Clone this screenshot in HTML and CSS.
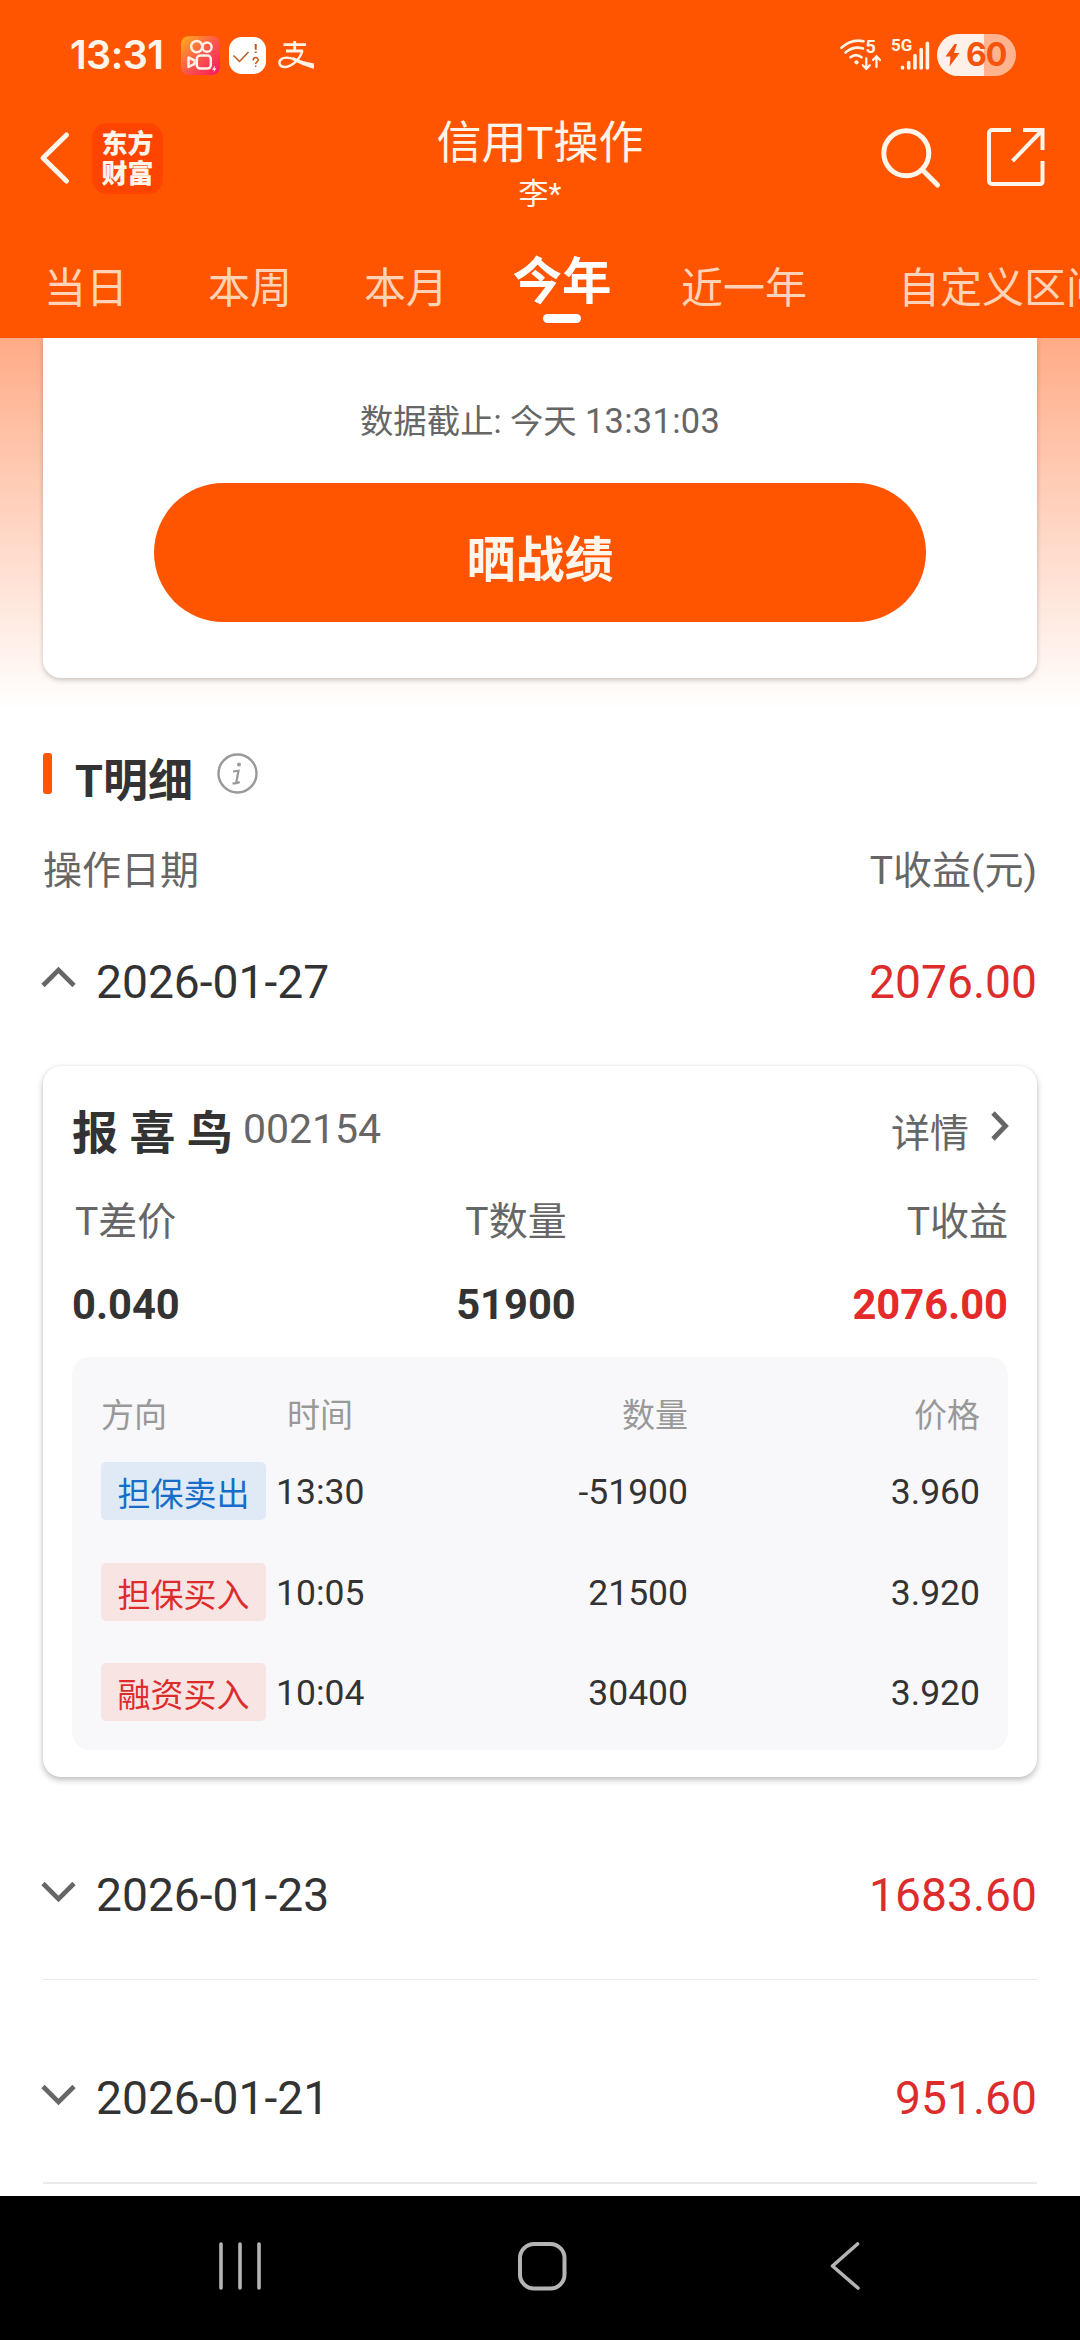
FILE: index.html
```html
<!DOCTYPE html>
<html lang="zh-CN">
<head>
<meta charset="utf-8">
<title>信用T操作</title>
<link rel="stylesheet" href="styles.css">
</head>
<body>
<header class="header">
  <div class="status">
    <span class="clock">13:31</span>
    <div class="status-apps">
      <svg width="39" height="39" viewBox="0 0 39 39">
        <defs><linearGradient id="ks" x1="0" y1="0" x2="1" y2="1"><stop offset="0" stop-color="#ffae1a"/><stop offset=".5" stop-color="#fb5a4c"/><stop offset="1" stop-color="#f9135f"/></linearGradient></defs>
        <rect width="39" height="39" rx="8" fill="url(#ks)"/>
        <g fill="none" stroke="#fff0e8" stroke-width="2.5"><circle cx="15.7" cy="10.6" r="5.6"/><circle cx="26" cy="11.2" r="4.6"/><rect x="15.8" y="19.6" width="14" height="13" rx="3.5"/><path d="M7.5 21.5v9.5l6-3.2v-3.4z" stroke-linejoin="round"/></g>
        <path d="M34 29.5l-3 4.2h2l-.6 2.8 3-4.2h-1.9z" fill="#fff0e8"/>
      </svg>
      <svg width="37" height="37" viewBox="0 0 37 37">
        <rect width="37" height="37" rx="12.5" fill="#fff"/>
        <g fill="none" stroke="#bb5a1d" stroke-width="1.5"><path d="M4.5 18.5l6 6L19.500 15"/><path d="M26.700 7v5.800M26.700 14.500v1.500" stroke-width="2"/><path d="M24.200 23.500c0-4 5-3.500 5-.6 0 2-2.500 1.800-2.500 4.100M26.700 28.500v1.500"/></g>
      </svg>
      <svg class="alipay" width="36" height="28" viewBox="0 0 36 28">
        <path d="M5.500 3.700H28M16.700 0v9.500M8 10h17" fill="none" stroke="#fff3e8" stroke-width="2.800"/>
        <path d="M24.500 9.500C22.500 17 14.500 26 6.500 26 1 26 0 20.500 3.500 18 7 15.500 12 16.500 18 19" fill="none" stroke="#fff3e8" stroke-width="2.400"/>
        <path d="M15 16Q24 20.500 36 22.500v5.500Q24 24.500 14 19z" fill="#fff3e8"/>
      </svg>
    </div>
    <div class="status-net">
      <svg width="44" height="34" viewBox="0 0 44 34">
        <g fill="none" stroke="#fff3e8" stroke-width="2.600" stroke-linecap="round"><path d="M2.500 9.800Q12 .7 24.500 3.200M6.500 14.500Q14.500 7.500 24 10.500M11.500 19.300Q17 14.800 22.500 19.300"/><path d="M27.300 20.500v10M23.800 27.300l3.500 3.500 3.500-3.500M37.500 29V18.500M34 22l3.500-3.500L41 22" stroke-width="2.300"/></g>
        <circle cx="17.500" cy="24.300" r="2.100" fill="#fff3e8"/>
        <text class="wifi-gen" x="26.500" y="15">5</text>
      </svg>
      <svg width="40" height="34" viewBox="0 0 40 34">
        <text class="cell-gen" x="1" y="12.500">5G</text>
        <path d="M12.500 30v-.8M18.700 30v-5.500M25 30V17.500M31.200 30V11.500M37.400 30V5.300" fill="none" stroke="#fff3e8" stroke-width="3.600" stroke-linecap="round"/>
      </svg>
      <div class="battery">
        <svg width="15" height="23" viewBox="0 0 15 23"><path d="M9.500 0L.5 12.500h5L4.500 22.500 14.500 9H9L12 0z" fill="#f4530b"/></svg>
        <span>60</span>
      </div>
    </div>
  </div>

  <div class="nav">
    <div class="nav-left">
      <svg width="29" height="52" viewBox="0 0 29 52"><path d="M26.500 3L3 26l23.500 23" fill="none" stroke="#fff5ea" stroke-width="5" stroke-linecap="round" stroke-linejoin="round"/></svg>
      <div class="logo">东方<br>财富</div>
    </div>
    <div class="nav-title"><h1>信用T操作</h1><p>李*</p></div>
    <div class="nav-right">
      <svg width="60" height="60" viewBox="0 0 60 60" fill="none" stroke="#fff5ea" stroke-width="5" stroke-linecap="round"><circle cx="25.300" cy="25.300" r="22.500"/><path d="M41.500 42L56.500 57"/></svg>
      <svg width="58" height="58" viewBox="0 0 58 58" fill="none" stroke="#fff5ea" stroke-width="4"><path d="M24 2H5a3 3 0 0 0-3 3v48a3 3 0 0 0 3 3h48a2.500 2.500 0 0 0 2.500-3V33M36 2h19.500v20M55 2.500L25.500 33"/></svg>
    </div>
  </div>

  <nav class="tabs">
    <span class="tab">当日</span>
    <span class="tab">本周</span>
    <span class="tab">本月</span>
    <span class="tab active">今年</span>
    <span class="tab">近一年</span>
    <span class="tab">自定义区间</span>
  </nav>
</header>

<main class="content">
  <section class="hero">
    <div class="hero-card">
      <p>数据截止: 今天 <span class="time">13:31:03</span></p>
      <div class="share">晒战绩</div>
    </div>
  </section>

  <section class="detail">
    <div class="section-title">
      <i class="mark"></i>
      <h2>T明细</h2>
      <svg width="41" height="41" viewBox="0 0 41 41"><circle cx="20.500" cy="20.500" r="19" fill="none" stroke="#999" stroke-width="2.400"/><circle cx="22" cy="11.500" r="2" fill="#999"/><path d="M16 18.500l5.500-.8-2.200 11.600q-.3 1.600 3.500-.3M15.500 30.300q3.500.5 7-1.300" fill="none" stroke="#999" stroke-width="2.200"/></svg>
    </div>
    <div class="columns"><span>操作日期</span><span>T收益(元)</span></div>

    <div class="day open">
      <svg class="chev" width="36" height="22" viewBox="0 0 36 22"><path d="M2 19.500L17.500 4 33 19.500" fill="none" stroke="#666" stroke-width="4.600"/></svg>
      <span class="date">2026-01-27</span><span class="profit">2076.00</span>
    </div>

    <div class="stock">
      <div class="stock-head">
        <strong>报 喜 鸟</strong><span class="code">002154</span><span class="more">详情</span>
        <svg width="20" height="32" viewBox="0 0 20 32"><path d="M3 3l12.500 13L3 29" fill="none" stroke="#666" stroke-width="4.800"/></svg>
      </div>
      <div class="stats labels"><span>T差价</span><span>T数量</span><span>T收益</span></div>
      <div class="stats values"><span>0.040</span><span>51900</span><span class="up">2076.00</span></div>
      <div class="trades">
        <div class="trade head"><span>方向</span><span>时间</span><span>数量</span><span>价格</span></div>
        <div class="trade"><span class="badge sell">担保卖出</span><span class="cell">13:30</span><span class="cell">-51900</span><span class="cell">3.960</span></div>
        <div class="trade"><span class="badge">担保买入</span><span class="cell">10:05</span><span class="cell">21500</span><span class="cell">3.920</span></div>
        <div class="trade"><span class="badge">融资买入</span><span class="cell">10:04</span><span class="cell">30400</span><span class="cell">3.920</span></div>
      </div>
    </div>

    <div class="day">
      <svg class="chev" width="36" height="22" viewBox="0 0 36 22"><path d="M2 2.500L17.500 18 33 2.500" fill="none" stroke="#666" stroke-width="4.600"/></svg>
      <span class="date">2026-01-23</span><span class="profit">1683.60</span>
    </div>
    <div class="day last">
      <svg class="chev" width="36" height="22" viewBox="0 0 36 22"><path d="M2 2.500L17.500 18 33 2.500" fill="none" stroke="#666" stroke-width="4.600"/></svg>
      <span class="date">2026-01-21</span><span class="profit">951.60</span>
    </div>
  </section>
</main>

<footer class="sysnav">
  <svg width="44" height="50" viewBox="0 0 44 50"><path d="M3 3v44M22 3v44M41 3v44" stroke="#b4b4b4" stroke-width="3.600" stroke-linecap="round"/></svg>
  <svg class="home" width="50" height="50" viewBox="0 0 50 50"><rect x="3" y="3" width="44.500" height="44.500" rx="14" fill="none" stroke="#b4b4b4" stroke-width="4"/></svg>
  <svg class="back" width="32" height="50" viewBox="0 0 32 50"><path d="M28.500 3L3.500 25l25.500 22" fill="none" stroke="#b4b4b4" stroke-width="3.600" stroke-linecap="round" stroke-linejoin="round"/></svg>
</footer>
</body>
</html>
```
FILE: styles.css
```css
* { box-sizing: border-box; margin: 0; padding: 0; }

body {
  width: 1080px;
  height: 2340px;
  display: flex;
  flex-direction: column;
  overflow: hidden;
  background: #fff;
  color: #333;
  font-family: Roboto, "Noto Sans CJK SC", sans-serif;
}

svg { display: block; flex: none; overflow: visible; }
span, p, h1, h2, strong { white-space: nowrap; }

/* Header */
.header {
  position: relative;
  z-index: 1;
  height: 338px;
  flex: none;
  background: #ff5500;
  color: #fff5ea;
}

.status {
  height: 110px;
  padding: 0 64px 0 70px;
  display: flex;
  align-items: center;
}
.clock {
  width: 111px;
  font: 600 39.5px/50px Inter, sans-serif;
  letter-spacing: -0.6px;
}
.status-apps { display: flex; align-items: center; gap: 9px; }
.alipay { margin-left: 3px; }
.status-net { margin-left: auto; display: flex; align-items: center; gap: 7px; }
.wifi-gen { font: 700 18px Roboto, sans-serif; fill: #fff3e8; }
.cell-gen { font: 700 17px Roboto, sans-serif; fill: #fff3e8; }
.battery {
  width: 79px;
  height: 42px;
  padding-left: 8px;
  border-radius: 21px;
  display: flex;
  align-items: center;
  gap: 6px;
  background: linear-gradient(90deg, #fff1e9 47px, #ffb48f 47px);
  color: #f4530b;
  font: 700 32px/42px Inter, sans-serif;
  letter-spacing: -1px;
}

.nav {
  height: 96px;
  display: grid;
  grid-template-columns: 1fr auto 1fr;
  grid-template-rows: 96px;
  align-items: center;
}
.nav-left { display: flex; align-items: center; gap: 23px; padding-left: 40px; }
.logo {
  width: 71px;
  height: 71px;
  padding-top: 4px;
  border-radius: 15px;
  background: #ff4400;
  text-align: center;
  font: 900 26px/30px "Noto Sans CJK SC", sans-serif;
}
.nav-title { align-self: start; padding-top: 7px; text-align: center; }
.nav-title h1 { font-size: 45px; line-height: 54px; font-weight: 400; }
.nav-title p { margin-top: 5px; font-size: 30px; line-height: 36px; }
.nav-right { display: flex; justify-content: flex-end; gap: 46px; padding-right: 35px; }

.tabs {
  height: 132px;
  padding-left: 2px;
  display: grid;
  grid-template-columns: 168px 160px 152px 160px 204px 314px;
  justify-items: center;
  align-items: start;
  overflow: hidden;
}
.tab { margin-top: 53px; font-size: 42px; line-height: 60px; color: #ffd3b8; }
.tab.active { margin-top: 46px; font-size: 49.5px; font-weight: 700; color: #fff; }
.tab.active::after {
  content: "";
  display: block;
  width: 38px;
  height: 9px;
  margin: 2px auto 0;
  border-radius: 5px;
  background: #fff;
}

/* Content */
.content { flex: 1; min-height: 0; overflow: hidden; }

.hero {
  height: 372px;
  padding: 0 43px;
  background: linear-gradient(#ffab86, #fff);
}
.hero-card {
  height: 340px;
  padding: 59px 111px 0;
  border-radius: 0 0 18px 18px;
  background: #fff;
  box-shadow: 0 2px 5px rgba(0, 0, 0, .22);
  text-align: center;
}
.hero-card p { height: 48px; font-size: 33.4px; line-height: 48px; color: #666; }
.time { font-size: 34.4px; letter-spacing: .3px; }
.share {
  height: 139px;
  margin-top: 38px;
  padding-top: 17px;
  border-radius: 70px;
  background: #ff5500;
  color: #fff5ea;
  font-size: 49px;
  line-height: 121px;
  font-weight: 700;
}

.detail { padding: 42px 43px 0; }
.section-title { height: 60px; display: flex; align-items: flex-start; }
.mark { width: 9px; height: 41px; margin: 1px 23px 0 0; border-radius: 3px; background: #ff5500; }
.section-title h2 { margin-right: 24px; font-size: 45px; line-height: 60px; font-weight: 700; }
.section-title svg { margin-top: 1px; }
.columns {
  margin-top: 31px;
  display: flex;
  justify-content: space-between;
  font-size: 39px;
  line-height: 56px;
  color: #666;
}

.day {
  padding: 88px 0 54px;
  border-bottom: 1px solid #ebebeb;
  display: flex;
  align-items: flex-start;
  font-size: 46.2px;
  line-height: 60px;
}
.day.open { padding: 53px 0 54px; border-bottom: 0; }
.day.last { border-bottom-width: 2px; }
.chev { margin: 16px 19px 0 -2px; }
.open .chev { margin-top: 14px; }
.profit { margin-left: auto; color: #dd2c2c; }

.stock {
  height: 711px;
  padding: 37px 29px 0;
  border-radius: 18px;
  background: #fff;
  box-shadow: 0 3px 6px rgba(0, 0, 0, .25), 0 0 2px rgba(0, 0, 0, .08);
}
.stock-head { height: 60px; display: flex; align-items: flex-start; }
.stock-head strong { font-size: 46px; line-height: 60px; }
.code { margin: 2px 0 0 10px; font-size: 41px; line-height: 48px; color: #666; }
.more { margin: 3px 21px 0 auto; font-size: 39px; line-height: 56px; color: #666; }
.stock-head svg { margin: 7px -2px 0 0; }

.stats { display: grid; grid-template-columns: 372px 144px 1fr; }
.stats span:nth-child(2) { text-align: center; }
.stats span:nth-child(3) { text-align: right; }
.labels { margin-top: 31px; font-size: 39px; line-height: 56px; color: #666; }
.labels span:first-child { padding-left: 3px; }
.values { margin-top: 31px; font-size: 41.7px; line-height: 48px; font-weight: 700; }
.up { color: #e52a2a; }

.trades {
  height: 393px;
  margin-top: 28px;
  padding: 35px 28px 0 29px;
  border-radius: 18px;
  background: #f8f8fa;
}
.trade {
  height: 58px;
  margin-bottom: 42.5px;
  display: grid;
  grid-template-columns: 175px 159px 253px 1fr;
  align-items: center;
}
.trade span:nth-child(n+3) { text-align: right; }
.trade.head { height: 48px; margin-bottom: 22px; font-size: 33px; line-height: 48px; color: #999; }
.trade.head span:nth-child(2) { padding-left: 11px; }
.cell { padding-top: 2px; font-size: 35.5px; line-height: 56px; }
.badge {
  width: 165px;
  height: 58px;
  padding-top: 8px;
  border-radius: 5px;
  background: #f9e4e4;
  color: #dd2c2c;
  font-size: 33px;
  line-height: 50px;
  text-align: center;
}
.badge.sell { background: #dfeaf6; color: #176dc9; }

/* System navigation */
.sysnav {
  height: 144px;
  flex: none;
  padding: 0 0 4px 218px;
  display: flex;
  align-items: center;
  background: #000;
}
.home { margin-left: 255px; }
.back { margin-left: 262px; }
```
